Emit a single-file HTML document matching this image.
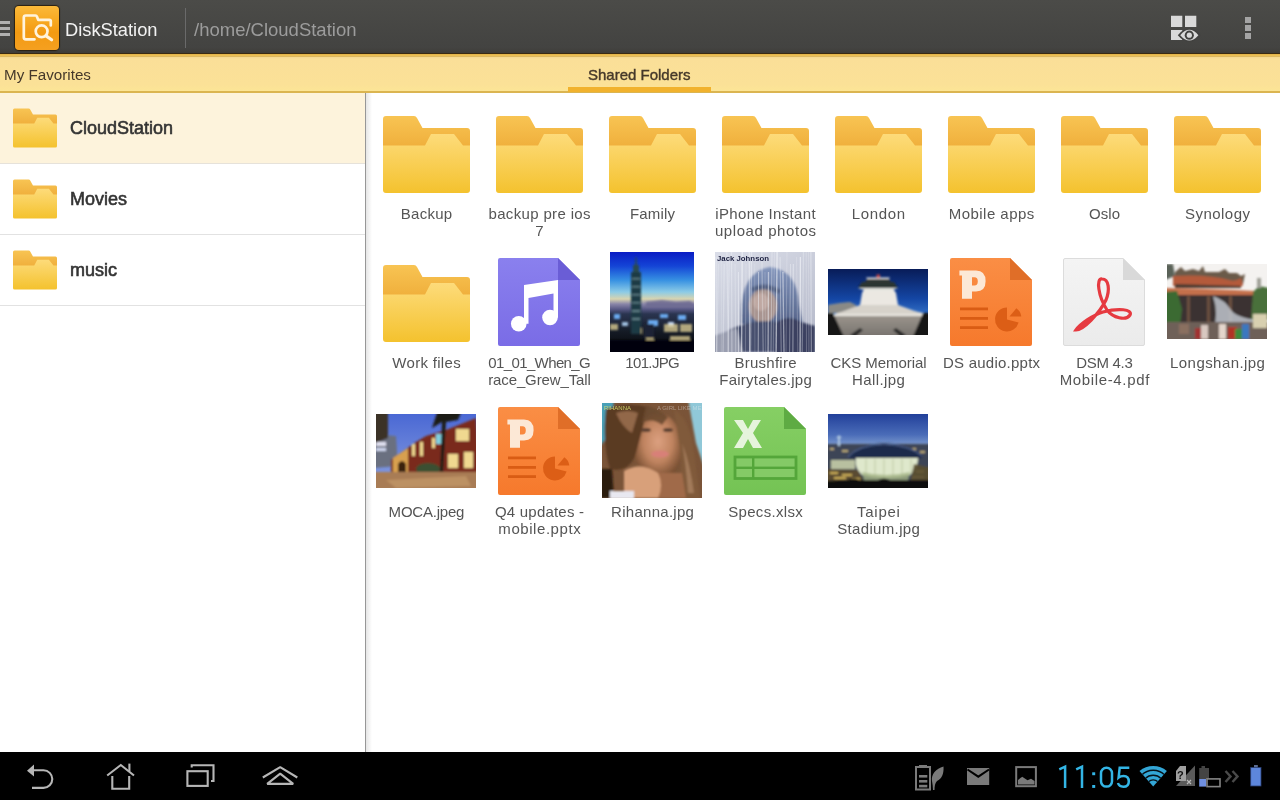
<!DOCTYPE html>
<html><head><meta charset="utf-8">
<style>
*{margin:0;padding:0;box-sizing:border-box}
html,body{width:1280px;height:800px;overflow:hidden;background:#fff;font-family:"Liberation Sans",sans-serif;-webkit-font-smoothing:antialiased}
.abs{will-change:transform}
.abs{position:absolute}
#hdr{left:0;top:0;width:1280px;height:53px;background:linear-gradient(#4b4b48,#434341 90%,#3e3c38)}
#hdrline{left:0;top:53px;width:1280px;height:4px;background:linear-gradient(#3a2a12 0,#3a2a12 0.8px,#e2b246 1.2px,#ecc056 2.4px,#e0b654 3.2px,#d9bc70 4px)}
#tabs{left:0;top:57px;width:1280px;height:34px;background:linear-gradient(#f4d890,#fadf98 2px,#fbe197 80%,#fce596)}
#tabline{left:0;top:91px;width:1280px;height:2px;background:#dbb551}
#tabul{left:568px;top:87px;width:143px;height:5px;background:#f1b22d}
.tabt{font-size:15px;color:#45382a;white-space:nowrap}
#left{left:0;top:93px;width:365px;height:659px;background:#fff}
.row{left:0;width:365px;height:71px}
.sep{left:0;width:365px;height:1px;background:#e2e2e2}
.lname{left:70px;font-size:18px;line-height:20px;color:#333;-webkit-text-stroke:0.6px #333;white-space:nowrap}
#vsep{left:365px;top:93px;width:1px;height:659px;background:#979797}
#vshadow{left:366px;top:93px;width:6px;height:659px;background:linear-gradient(90deg,#e6e6e6,#fff)}
.lbl{width:113px;text-align:center;font-size:15px;line-height:17px;color:#555;white-space:nowrap}
#nav{left:0;top:752px;width:1280px;height:48px;background:#000}
</style></head><body>
<svg width="0" height="0" style="position:absolute">
<defs>
<linearGradient id="fb" x1="0" y1="0" x2="0" y2="1"><stop offset="0" stop-color="#f8c453"/><stop offset="1" stop-color="#eda935"/></linearGradient>
<linearGradient id="ff" x1="0" y1="0" x2="0" y2="1"><stop offset="0" stop-color="#fddb7a"/><stop offset="1" stop-color="#f4c22e"/></linearGradient>
<symbol id="folder" viewBox="0 0 87 77">
<path d="M0,3Q0,0 3,0L31,0Q33,0 34,2L39.5,12L84,12Q87,12 87,15L87,40L0,40Z" fill="url(#fb)"/>
<path d="M0,29.6L42,29.6L48,18L71,18L80,29.6L87,29.6L87,74Q87,77 84,77L3,77Q0,77 0,74Z" fill="url(#ff)"/>
</symbol>
<linearGradient id="gmus" x1="0" y1="0" x2="0" y2="1"><stop offset="0" stop-color="#8a80ee"/><stop offset="1" stop-color="#7a6ce6"/></linearGradient>
<symbol id="musicdoc" viewBox="0 0 82 88">
<path d="M2,0L60,0L82,22L82,86Q82,88 80,88L2,88Q0,88 0,86L0,2Q0,0 2,0Z" fill="url(#gmus)"/>
<path d="M60,0L82,22L60,22Z" fill="#6a5dd6"/>
<path d="M26,27L60,22L60,59.5L55.5,59.5L55.5,35.5L30.5,40L30.5,65.75L26,65.75Z" fill="#fff"/>
<circle cx="20.75" cy="65.75" r="7.8" fill="#fff"/>
<circle cx="52" cy="59.5" r="7.8" fill="#fff"/>
</symbol>
<linearGradient id="gppt" x1="0" y1="0" x2="0" y2="1"><stop offset="0" stop-color="#fa8e45"/><stop offset="1" stop-color="#f6792c"/></linearGradient>
<symbol id="pptdoc" viewBox="0 0 82 88">
<path d="M2,0L60,0L82,22L82,86Q82,88 80,88L2,88Q0,88 0,86L0,2Q0,0 2,0Z" fill="url(#gppt)"/>
<path d="M60,0L82,22L60,22Z" fill="#e06e28"/>
<path d="M9.4,12.6L26,12.6Q35.6,12.6 35.6,23.3Q35.6,33.5 26,33.5L22,33.5L22,40.75L12,40.75L12,17.5L9.4,17.5Z M22,19.2L24.5,19.2Q27.8,19.2 27.8,23.3Q27.8,27.6 24.5,27.6L22,27.6Z" fill="#fce8d6" fill-rule="evenodd"/>
<rect x="10" y="49.5" width="28" height="2.8" fill="#d95c14"/>
<rect x="10" y="59" width="28" height="2.8" fill="#d95c14"/>
<rect x="10" y="68.2" width="28" height="2.8" fill="#d95c14"/>
<path d="M57,61.4L57,49.4A12,12 0 1 0 68.6,64.5Z" fill="#dc5e16"/>
<path d="M59.5,58.5L66.4,50.3A12,12 0 0 1 71.3,58.5Z" fill="#dc5e16"/>
</symbol>
<linearGradient id="gpdf" x1="0" y1="0" x2="0" y2="1"><stop offset="0" stop-color="#f4f4f4"/><stop offset="1" stop-color="#ebebeb"/></linearGradient>
<symbol id="pdfdoc" viewBox="0 0 82 88">
<path d="M2,0.5L60,0.5L81.5,22L81.5,86Q81.5,87.5 80,87.5L2,87.5Q0.5,87.5 0.5,86L0.5,2Q0.5,0.5 2,0.5Z" fill="url(#gpdf)" stroke="#dcdcdc" stroke-width="1"/>
<path d="M60,0L82,22L60,22Z" fill="#d9d9d9"/>
<path d="M39,21 C33,20 35,38 44,52 C50,60 63,63 67,57 C70,51 55,50 40,54 C30,57 17,66 13,72 C20,72 36,56 43,42 C47,32 46,21 39,21Z" fill="none" stroke="#e63a40" stroke-width="3.2"/>
</symbol>
<linearGradient id="gxls" x1="0" y1="0" x2="0" y2="1"><stop offset="0" stop-color="#86cf64"/><stop offset="1" stop-color="#74c354"/></linearGradient>
<symbol id="xlsdoc" viewBox="0 0 82 88">
<path d="M2,0L60,0L82,22L82,86Q82,88 80,88L2,88Q0,88 0,86L0,2Q0,0 2,0Z" fill="url(#gxls)"/>
<path d="M60,0L82,22L60,22Z" fill="#5eab43"/>
<path d="M10,13L19,13L24,22L29,13L37,13L29,26L38,41L29,41L24,32L19,41L10,41L19,26Z" fill="#e6f4dc"/>
<rect x="11" y="50" width="61" height="21.5" fill="#84ca66" stroke="#54a63a" stroke-width="2.8"/>
<rect x="11" y="59.6" width="61" height="2.4" fill="#54a63a"/>
<rect x="28" y="50" width="2.4" height="21.5" fill="#54a63a"/>
</symbol>

</defs>
</svg>

<div id="hdr" class="abs"></div>
<div id="hdrline" class="abs"></div>
<div id="tabs" class="abs"></div>
<div id="tabline" class="abs"></div>
<div id="tabul" class="abs"></div>
<div class="abs tabt" style="left:4px;top:66px;font-size:15.2px">My Favorites</div>
<div class="abs tabt" style="left:588px;top:66px;-webkit-text-stroke:0.4px #45382a">Shared Folders</div>

<!-- header content -->
<div class="abs" style="left:0;top:21px;width:10px;height:3px;background:#b0b0b0"></div>
<div class="abs" style="left:0;top:27px;width:10px;height:3px;background:#b0b0b0"></div>
<div class="abs" style="left:0;top:33px;width:10px;height:3px;background:#b0b0b0"></div>
<div class="abs" style="left:15px;top:6px;width:44px;height:44px;border-radius:4px;background:linear-gradient(#fbb93a,#f7a820 35%,#f39a12 60%,#f5a020);box-shadow:0 0 1px 1px #2a2010"></div>
<svg class="abs" style="left:15px;top:6px" width="44" height="44"><g fill="none" stroke="#fff3dc" stroke-width="2.7" stroke-linecap="round" stroke-linejoin="round"><path d="M19.5,33.3L10.8,33.3Q8.8,33.3 8.8,31.3L8.8,11.5Q8.8,9.5 10.8,9.5L20.5,9.5Q21.5,9.5 22,10.8L23.2,13.8L34.3,13.8Q35.8,13.8 35.8,15.3L35.8,19.5"/><circle cx="26.6" cy="25.3" r="5.9"/></g><line x1="31" y1="29.9" x2="36.6" y2="33.8" stroke="#fff3dc" stroke-width="3.2" stroke-linecap="round"/></svg>
<svg class="abs" style="left:1165px;top:10px" width="40" height="40"><g fill="#d9d9d9"><rect x="6" y="5.75" width="11.3" height="11.25"/><rect x="20" y="5.75" width="11.3" height="11.25"/><rect x="6" y="20" width="11.3" height="10"/></g><path d="M12.8,25.2Q24.3,11.5 35.8,25.2Q24.3,38.9 12.8,25.2Z" fill="#424240"/><path d="M15.2,25.2Q24.3,14.5 33.4,25.2Q24.3,35.9 15.2,25.2Z" fill="#d9d9d9"/><circle cx="24.3" cy="25.2" r="4.6" fill="#424240"/><circle cx="24.3" cy="25.2" r="2.6" fill="#d9d9d9"/></svg>
<div class="abs" style="left:1245px;top:17px;width:6px;height:6px;background:#a4a4a4"></div>
<div class="abs" style="left:1245px;top:25px;width:6px;height:6px;background:#a4a4a4"></div>
<div class="abs" style="left:1245px;top:33px;width:6px;height:6px;background:#a4a4a4"></div>
<div class="abs" style="left:65px;top:18.8px;font-size:18.3px;color:#f2f2f2;white-space:nowrap">DiskStation</div>
<div class="abs" style="left:185px;top:8px;width:1px;height:40px;background:#6a6a6a"></div>
<div class="abs" style="left:194px;top:19px;font-size:18.5px;color:#9c9c9c;white-space:nowrap">/home/CloudStation</div>

<!-- left panel -->
<div id="left" class="abs"></div>
<div class="abs row" style="top:93px;height:70px;background:#fdf3dc"></div>
<div class="abs sep" style="top:163px;background:#e6e2da"></div>
<div class="abs sep" style="top:234px"></div>
<div class="abs sep" style="top:305px"></div>
<svg class="abs" style="left:13px;top:108px" width="44" height="40"><use href="#folder"/></svg>
<svg class="abs" style="left:13px;top:179px" width="44" height="40"><use href="#folder"/></svg>
<svg class="abs" style="left:13px;top:250px" width="44" height="40"><use href="#folder"/></svg>
<div class="abs lname" style="top:117.8px">CloudStation</div>
<div class="abs lname" style="top:188.8px">Movies</div>
<div class="abs lname" style="top:259.8px">music</div>
<div id="vsep" class="abs"></div>
<div id="vshadow" class="abs"></div>

<!-- GRID -->
<svg class="abs" style="left:382.5px;top:116px" width="87" height="77"><use href="#folder"/></svg>
<div class="abs lbl" style="left:369.5px;top:205.3px"><div style="letter-spacing:0.26px;text-indent:0.26px">Backup</div></div>
<svg class="abs" style="left:495.5px;top:116px" width="87" height="77"><use href="#folder"/></svg>
<div class="abs lbl" style="left:482.5px;top:205.3px"><div style="letter-spacing:0.35px;text-indent:0.35px">backup pre ios</div><div style="letter-spacing:0px;text-indent:0px">7</div></div>
<svg class="abs" style="left:608.5px;top:116px" width="87" height="77"><use href="#folder"/></svg>
<div class="abs lbl" style="left:595.5px;top:205.3px"><div style="letter-spacing:0.16px;text-indent:0.16px">Family</div></div>
<svg class="abs" style="left:721.5px;top:116px" width="87" height="77"><use href="#folder"/></svg>
<div class="abs lbl" style="left:708.5px;top:205.3px"><div style="letter-spacing:0.34px;text-indent:0.34px">iPhone Instant</div><div style="letter-spacing:0.58px;text-indent:0.58px">upload photos</div></div>
<svg class="abs" style="left:834.5px;top:116px" width="87" height="77"><use href="#folder"/></svg>
<div class="abs lbl" style="left:821.5px;top:205.3px"><div style="letter-spacing:0.64px;text-indent:0.64px">London</div></div>
<svg class="abs" style="left:947.5px;top:116px" width="87" height="77"><use href="#folder"/></svg>
<div class="abs lbl" style="left:934.5px;top:205.3px"><div style="letter-spacing:0.47px;text-indent:0.47px">Mobile apps</div></div>
<svg class="abs" style="left:1060.5px;top:116px" width="87" height="77"><use href="#folder"/></svg>
<div class="abs lbl" style="left:1047.5px;top:205.3px"><div style="letter-spacing:0.13px;text-indent:0.13px">Oslo</div></div>
<svg class="abs" style="left:1173.5px;top:116px" width="87" height="77"><use href="#folder"/></svg>
<div class="abs lbl" style="left:1160.5px;top:205.3px"><div style="letter-spacing:0.46px;text-indent:0.46px">Synology</div></div>
<svg class="abs" style="left:382.5px;top:265px" width="87" height="77"><use href="#folder"/></svg>
<div class="abs lbl" style="left:369.5px;top:354.3px"><div style="letter-spacing:0.3px;text-indent:0.3px">Work files</div></div>
<svg class="abs" style="left:498.0px;top:258px" width="82" height="88" viewBox="0 0 82 88"><use href="#musicdoc"/></svg>
<div class="abs lbl" style="left:482.5px;top:354.3px"><div style="letter-spacing:-0.61px;text-indent:-0.61px">01_01_When_G</div><div style="letter-spacing:-0.13px;text-indent:-0.13px">race_Grew_Tall</div></div>
<svg class="abs" style="left:610px;top:252px" width="84" height="100" viewBox="0 0 84 100" preserveAspectRatio="none"><defs><linearGradient id="s101" x1="0" y1="0" x2="0" y2="1"><stop offset="0" stop-color="#0a1cc4"/><stop offset="0.14" stop-color="#1444d6"/><stop offset="0.28" stop-color="#3690e2"/><stop offset="0.4" stop-color="#8ccbe6"/><stop offset="0.47" stop-color="#d8d4b0"/><stop offset="0.52" stop-color="#8a86a8"/><stop offset="0.57" stop-color="#5a5a86"/><stop offset="0.62" stop-color="#2a3450"/><stop offset="0.8" stop-color="#141a24"/><stop offset="1" stop-color="#040506"/></linearGradient><filter id="b101" x="-5%" y="-5%" width="110%" height="110%"><feGaussianBlur stdDeviation="0.9"/></filter><clipPath id="c101"><rect width="84" height="100"/></clipPath></defs>
<g clip-path="url(#c101)"><rect width="84" height="100" fill="url(#s101)"/>
<g filter="url(#b101)">
<path d="M36,50 L52,48 L66,50 L80,49 L84,52 L84,55 L36,55Z" fill="#6a6890" opacity="0.8"/>
<g fill="#6aaaf0"><rect x="4" y="62" width="6" height="5"/><rect x="38" y="68" width="10" height="6"/><rect x="50" y="62" width="8" height="4"/><rect x="68" y="63" width="8" height="5"/><rect x="58" y="70" width="6" height="5" fill="#c8e0ff"/><rect x="12" y="70" width="6" height="4" fill="#a0c0e0"/></g>
<g fill="#d8c890" opacity="0.8"><rect x="22" y="76" width="10" height="6"/><rect x="54" y="72" width="14" height="8"/><rect x="70" y="72" width="12" height="8"/><rect x="0" y="72" width="8" height="6"/><rect x="36" y="84" width="8" height="4"/><rect x="60" y="84" width="20" height="4"/></g>
<rect x="34" y="72" width="10" height="14" fill="#1a2434"/>
<path d="M21,20 L31,20 L31,82 L21,82Z" fill="#1f3a44"/>
<path d="M23,13 L29,13 L29,20 L23,20Z M25.5,5 L26.5,5 L27,13 L25,13Z" fill="#2a4850"/>
<g fill="#9cc0c8" opacity="0.5"><rect x="22" y="26" width="8" height="1.5"/><rect x="22" y="34" width="8" height="1.5"/><rect x="22" y="42" width="8" height="1.5"/><rect x="22" y="50" width="8" height="1.5"/><rect x="22" y="58" width="8" height="2"/><rect x="22" y="66" width="8" height="2"/></g>
<rect x="-5" y="88" width="94" height="20" fill="#050607"/>
</g></g>
</svg>
<div class="abs lbl" style="left:595.5px;top:354.3px"><div style="letter-spacing:-0.63px;text-indent:-0.63px">101.JPG</div></div>
<svg class="abs" style="left:715px;top:252px" width="100" height="100" viewBox="0 0 100 100" preserveAspectRatio="none"><defs><linearGradient id="sjk" x1="0" y1="0" x2="0.6" y2="1"><stop offset="0" stop-color="#dadde8"/><stop offset="1" stop-color="#b8bccc"/></linearGradient><linearGradient id="hjk" x1="0" y1="0" x2="0" y2="1"><stop offset="0" stop-color="#8496bc"/><stop offset="1" stop-color="#55648a"/></linearGradient><filter id="bjk" x="-5%" y="-5%" width="110%" height="110%"><feGaussianBlur stdDeviation="1.2"/></filter><clipPath id="cjk"><rect width="100" height="100"/></clipPath></defs>
<g clip-path="url(#cjk)"><rect width="100" height="100" fill="url(#sjk)"/>
<g filter="url(#bjk)">
<path d="M26,62 Q26,20 55,15 Q82,18 84,52 L88,72 L26,72Z" fill="url(#hjk)"/>
<ellipse cx="48" cy="54" rx="14" ry="17" fill="#a89490"/>
<ellipse cx="46" cy="50" rx="8" ry="9" fill="#c4aca6" opacity="0.8"/>
<path d="M36,36 Q50,28 66,38 L64,42 Q50,34 38,40Z" fill="#4a5878" opacity="0.8"/>
<path d="M14,78 Q40,66 62,70 L100,74 L100,100 L10,100Z" fill="#46506e"/>
<path d="M-2,84 L22,76 L28,102 L-2,102Z" fill="#9a9eb0"/>
<path d="M62,70 Q74,62 86,70 L100,74 L100,102 L60,102Z" fill="#3a4060"/>
</g>
<g stroke="#f6f8fc"><line x1="1.0" y1="5" x2="1.5" y2="100" stroke-width="1.0" stroke-opacity="0.4"/><line x1="3.3" y1="12" x2="2.0" y2="100" stroke-width="0.6" stroke-opacity="0.5"/><line x1="6.6" y1="5" x2="6.3" y2="100" stroke-width="0.6" stroke-opacity="0.3"/><line x1="9.2" y1="12" x2="8.1" y2="100" stroke-width="1.3" stroke-opacity="0.3"/><line x1="11.9" y1="0" x2="13.3" y2="100" stroke-width="0.6" stroke-opacity="0.6"/><line x1="14.2" y1="5" x2="13.1" y2="100" stroke-width="0.8" stroke-opacity="0.5"/><line x1="16.6" y1="0" x2="16.9" y2="100" stroke-width="1.0" stroke-opacity="0.4"/><line x1="20.1" y1="12" x2="20.7" y2="100" stroke-width="1.0" stroke-opacity="0.3"/><line x1="23.4" y1="20" x2="23.5" y2="100" stroke-width="0.8" stroke-opacity="0.6"/><line x1="27.2" y1="0" x2="26.6" y2="100" stroke-width="1.3" stroke-opacity="0.6"/><line x1="31.0" y1="12" x2="30.4" y2="100" stroke-width="0.8" stroke-opacity="0.3"/><line x1="34.2" y1="0" x2="34.5" y2="100" stroke-width="1.0" stroke-opacity="0.6"/><line x1="36.5" y1="0" x2="35.5" y2="100" stroke-width="1.3" stroke-opacity="0.4"/><line x1="39.7" y1="12" x2="39.9" y2="100" stroke-width="0.6" stroke-opacity="0.3"/><line x1="43.6" y1="20" x2="43.2" y2="100" stroke-width="1.0" stroke-opacity="0.5"/><line x1="46.8" y1="0" x2="48.2" y2="100" stroke-width="1.3" stroke-opacity="0.3"/><line x1="50.0" y1="20" x2="50.6" y2="100" stroke-width="0.6" stroke-opacity="0.3"/><line x1="53.5" y1="20" x2="53.1" y2="100" stroke-width="1.3" stroke-opacity="0.5"/><line x1="57.0" y1="0" x2="56.0" y2="100" stroke-width="0.6" stroke-opacity="0.6"/><line x1="59.4" y1="0" x2="58.3" y2="100" stroke-width="0.6" stroke-opacity="0.4"/><line x1="62.1" y1="0" x2="61.1" y2="100" stroke-width="1.3" stroke-opacity="0.6"/><line x1="65.1" y1="5" x2="66.2" y2="100" stroke-width="1.0" stroke-opacity="0.4"/><line x1="67.9" y1="20" x2="69.0" y2="100" stroke-width="1.3" stroke-opacity="0.5"/><line x1="72.0" y1="0" x2="71.0" y2="100" stroke-width="0.8" stroke-opacity="0.3"/><line x1="75.5" y1="12" x2="74.6" y2="100" stroke-width="0.6" stroke-opacity="0.6"/><line x1="78.3" y1="12" x2="77.9" y2="100" stroke-width="0.8" stroke-opacity="0.6"/><line x1="81.6" y1="5" x2="82.8" y2="100" stroke-width="0.8" stroke-opacity="0.3"/><line x1="85.4" y1="5" x2="85.1" y2="100" stroke-width="1.3" stroke-opacity="0.6"/><line x1="88.5" y1="0" x2="87.2" y2="100" stroke-width="1.3" stroke-opacity="0.3"/><line x1="91.2" y1="0" x2="91.5" y2="100" stroke-width="0.8" stroke-opacity="0.3"/><line x1="93.6" y1="0" x2="93.9" y2="100" stroke-width="0.8" stroke-opacity="0.3"/><line x1="95.9" y1="0" x2="96.3" y2="100" stroke-width="0.8" stroke-opacity="0.6"/></g>
<text x="2" y="8.5" style="font-family:'Liberation Sans'" font-weight="bold" font-size="7.8" fill="#1c2040">Jack Johnson</text></g></svg>
<div class="abs lbl" style="left:708.5px;top:354.3px"><div style="letter-spacing:0.26px;text-indent:0.26px">Brushfire</div><div style="letter-spacing:0.25px;text-indent:0.25px">Fairytales.jpg</div></div>
<svg class="abs" style="left:828px;top:269px" width="100" height="66" viewBox="0 0 100 66" preserveAspectRatio="none"><defs><linearGradient id="scks" x1="0" y1="0" x2="0" y2="1"><stop offset="0" stop-color="#081c58"/><stop offset="0.45" stop-color="#1446a4"/><stop offset="0.62" stop-color="#2a64bc"/></linearGradient>
<linearGradient id="gcks" x1="0" y1="0" x2="0" y2="1"><stop offset="0" stop-color="#9a948c"/><stop offset="1" stop-color="#706c68"/></linearGradient><filter id="bcks" x="-5%" y="-5%" width="110%" height="110%"><feGaussianBlur stdDeviation="0.9"/></filter><clipPath id="ccks"><rect width="100" height="66"/></clipPath></defs>
<g clip-path="url(#ccks)"><rect width="100" height="66" fill="url(#scks)"/>
<g filter="url(#bcks)">
<path d="M0,36 L12,34 L22,33 L28,36 L28,44 L0,44Z" fill="#8a8a86"/>
<path d="M37,18 L64,18 L68,24 L70,36 L76,40 L95,44 L98,47 L0,47 L10,44 L26,40 L32,36 L34,24Z" fill="#ebe8e2"/>
<path d="M32,36 L70,36 L95,45 L8,45Z" fill="#d6d2ca"/>
<path d="M34,13 L66,13 L70,19 L30,19Z" fill="#2a3430"/>
<path d="M30,19 L70,19 L66,20.5 L34,20.5Z" fill="#d8dcd8"/>
<path d="M40,9 L60,9 L63,13 L37,13Z" fill="#303834"/>
<path d="M38,8.5 L62,8.5 L61,10 L39,10Z" fill="#e0e0e0"/>
<rect x="48.5" y="5.5" width="3.5" height="3.5" fill="#c84848"/>
<rect x="-5" y="47" width="110" height="25" fill="url(#gcks)"/>
<path d="M-2,44 L5,44 L17,70 L-2,70Z" fill="#181818"/>
<path d="M102,44 L95,44 L84,70 L102,70Z" fill="#181818"/>
<path d="M22,66 L32,59 L35,61 L27,68Z M78,66 L68,59 L65,61 L73,68Z" fill="#2a2a2a"/>
</g></g>
</svg>
<div class="abs lbl" style="left:821.5px;top:354.3px"><div style="letter-spacing:-0.04px;text-indent:-0.04px">CKS Memorial</div><div style="letter-spacing:0.41px;text-indent:0.41px">Hall.jpg</div></div>
<svg class="abs" style="left:950.0px;top:258px" width="82" height="88" viewBox="0 0 82 88"><use href="#pptdoc"/></svg>
<div class="abs lbl" style="left:934.5px;top:354.3px"><div style="letter-spacing:0.24px;text-indent:0.24px">DS audio.pptx</div></div>
<svg class="abs" style="left:1063.0px;top:258px" width="82" height="88" viewBox="0 0 82 88"><use href="#pdfdoc"/></svg>
<div class="abs lbl" style="left:1047.5px;top:354.3px"><div style="letter-spacing:-0.28px;text-indent:-0.28px">DSM 4.3</div><div style="letter-spacing:0.65px;text-indent:0.65px">Mobile-4.pdf</div></div>
<svg class="abs" style="left:1167px;top:264px" width="100" height="75" viewBox="0 0 100 75" preserveAspectRatio="none"><defs><filter id="blg" x="-5%" y="-5%" width="110%" height="110%"><feGaussianBlur stdDeviation="1"/></filter><clipPath id="clg"><rect width="100" height="75"/></clipPath></defs>
<g clip-path="url(#clg)"><rect width="100" height="75" fill="#f4f2f0"/>
<g filter="url(#blg)">
<path d="M-2,0 L6,0 L8,12 L-2,16Z" fill="#5a6258"/>
<path d="M8,8 L14,3 L18,7 L26,5 L32,7 L36,2 L38,8 L52,8 L58,5 L62,9 L70,9 L74,12 L78,10 L76,20 L8,20Z" fill="#6a5a4a"/>
<path d="M6,12 Q40,10 62,16 Q68,18 74,14 L76,22 L6,22Z" fill="#b45a3a"/>
<path d="M8,20 L74,22 L74,24 L8,24Z" fill="#4a3a30"/>
<path d="M-2,24 Q50,25 88,27 L95,31 L-2,32Z" fill="#c4704c"/>
<rect x="-2" y="31" width="90" height="30" fill="#3a3230"/>
<g fill="#6a5040"><rect x="20" y="32" width="3" height="26"/><rect x="40" y="32" width="3" height="26"/><rect x="62" y="32" width="3" height="26"/></g>
<path d="M86,28 L92,22 L102,24 L102,56 L84,56Z" fill="#48703a"/>
<rect x="90" y="14" width="4" height="10" fill="#a0a098"/>
<path d="M-2,28 L10,27 L15,45 L12,70 L-2,70Z" fill="#3a6a30"/>
<path d="M46,32 Q58,36 64,46 Q70,54 92,56 L92,66 L46,66 Q52,50 46,32Z" fill="#c0c4cc" opacity="0.85"/>
<rect x="-2" y="58" width="104" height="19" fill="#6e6058"/>
<rect x="34" y="61" width="7" height="14" fill="#d8c8c0"/><rect x="52" y="60" width="7" height="15" fill="#e4d6cc"/><rect x="61" y="63" width="9" height="12" fill="#b03028"/><rect x="75" y="60" width="7" height="15" fill="#3a78c0"/><rect x="28" y="64" width="6" height="11" fill="#a03030"/><rect x="68" y="65" width="7" height="10" fill="#3a8a3a"/><rect x="86" y="50" width="14" height="14" fill="#d8d0b0"/><rect x="12" y="60" width="10" height="10" fill="#8a7060"/>
</g></g>
</svg>
<div class="abs lbl" style="left:1160.5px;top:354.3px"><div style="letter-spacing:0.44px;text-indent:0.44px">Longshan.jpg</div></div>
<svg class="abs" style="left:376px;top:414px" width="100" height="74" viewBox="0 0 100 74" preserveAspectRatio="none"><defs><linearGradient id="smoca" x1="0" y1="0" x2="0" y2="1"><stop offset="0" stop-color="#4a68d4"/><stop offset="1" stop-color="#8aa0e0"/></linearGradient><filter id="bmo" x="-5%" y="-5%" width="110%" height="110%"><feGaussianBlur stdDeviation="0.8"/></filter><clipPath id="cmo"><rect width="100" height="74"/></clipPath></defs>
<g clip-path="url(#cmo)"><rect width="100" height="74" fill="url(#smoca)"/>
<g filter="url(#bmo)">
<path d="M-4,20 L20,22 L22,52 L-4,54Z" fill="#6a7080"/>
<rect x="0" y="28" width="10" height="4" fill="#e0e0f0"/><rect x="0" y="34" width="10" height="3" fill="#d0d8f0"/>
<path d="M-4,-4 L12,-4 L12,24 L-4,30Z" fill="#3a3028"/>
<path d="M15,46 L40,28 L50,22 L70,16 L100,4 L104,60 L15,60Z" fill="#7a2c1c"/>
<path d="M17,44 L32,34 L32,58 L17,58Z" fill="#d8a050"/>
<path d="M22,50 Q26,44 30,50 L30,58 L22,58Z" fill="#3a2010"/>
<g fill="#f0d890"><rect x="72" y="40" width="10" height="14"/><rect x="88" y="38" width="9" height="16"/><rect x="80" y="15" width="13" height="12"/><rect x="36" y="30" width="3" height="12"/><rect x="44" y="28" width="3" height="14"/><rect x="56" y="24" width="3" height="10"/></g>
<rect x="60" y="20" width="6" height="10" fill="#80d0e0"/>
<path d="M62,-4 L86,-4 L82,6 L70,8 L67,60 L64,60 L66,8 L56,14Z" fill="#1e1c18"/>
<ellipse cx="52" cy="55" rx="12" ry="6" fill="#3a5030"/>
<rect x="-4" y="58" width="108" height="20" fill="#a87c54"/>
<path d="M10,66 L90,62 L95,72 L20,74Z" fill="#c49a6a" opacity="0.7"/>
</g></g>
</svg>
<div class="abs lbl" style="left:369.5px;top:503.3px"><div style="letter-spacing:-0.22px;text-indent:-0.22px">MOCA.jpeg</div></div>
<svg class="abs" style="left:498.0px;top:407px" width="82" height="88" viewBox="0 0 82 88"><use href="#pptdoc"/></svg>
<div class="abs lbl" style="left:482.5px;top:503.3px"><div style="letter-spacing:0.21px;text-indent:0.21px">Q4 updates -</div><div style="letter-spacing:0.56px;text-indent:0.56px">mobile.pptx</div></div>
<svg class="abs" style="left:602px;top:403px" width="100" height="95" viewBox="0 0 100 95" preserveAspectRatio="none"><defs><radialGradient id="rface" cx="0.5" cy="0.42" r="0.6"><stop offset="0" stop-color="#dca080"/><stop offset="0.5" stop-color="#c08460"/><stop offset="1" stop-color="#6a4428"/></radialGradient><filter id="bri" x="-5%" y="-5%" width="110%" height="110%"><feGaussianBlur stdDeviation="1.3"/></filter><clipPath id="cri"><rect width="100" height="95"/></clipPath></defs>
<g clip-path="url(#cri)"><rect width="100" height="95" fill="#7a5438"/>
<g filter="url(#bri)">
<path d="M-4,-4 L12,-4 L8,30 L-4,46Z" fill="#4aa0b8"/>
<path d="M86,-4 L104,-4 L104,70 L94,40Z" fill="#90c8d8"/>
<ellipse cx="56" cy="44" rx="24" ry="34" fill="url(#rface)"/>
<path d="M4,6 Q26,-2 46,4 Q40,28 34,50 Q28,70 8,66 Q0,40 4,6Z" fill="#5a3a22"/>
<path d="M14,10 Q26,6 36,10 L30,30 Q20,24 14,10Z" fill="#a07452" opacity="0.8"/>
<path d="M44,2 Q56,6 66,14 L60,22 Q50,14 40,20Z" fill="#6a4a30" opacity="0.9"/>
<path d="M72,6 Q88,16 92,50 L98,95 L76,95 Q82,60 76,32Z" fill="#805a3a"/>
<path d="M80,40 Q88,60 92,90 L86,90 Q84,60 80,40Z" fill="#b08868" opacity="0.7"/>
<ellipse cx="44" cy="27" rx="5" ry="2" fill="#5a4030"/>
<ellipse cx="66" cy="27" rx="5" ry="2" fill="#5a4030"/>
<ellipse cx="58" cy="51" rx="9" ry="3.5" fill="#d88078"/>
<path d="M56,70 L80,70 L84,95 L54,95Z" fill="#a06a48"/>
<path d="M22,68 Q38,58 56,70 Q62,82 56,95 L22,95Z" fill="#d8a07a"/>
<path d="M-4,66 L10,66 L12,95 L-4,95Z" fill="#2a1a10"/>
<rect x="8" y="88" width="24" height="8" fill="#e8e8f0"/>
</g>
<text x="2" y="7" style="font-family:'Liberation Sans'" font-size="6" fill="#d8e070" opacity="0.85">RIHANNA</text>
<text x="55" y="7" style="font-family:'Liberation Sans'" font-size="6" fill="#f0f0f0" opacity="0.4">A GIRL LIKE ME</text>
</g>
</svg>
<div class="abs lbl" style="left:595.5px;top:503.3px"><div style="letter-spacing:0.28px;text-indent:0.28px">Rihanna.jpg</div></div>
<svg class="abs" style="left:724.0px;top:407px" width="82" height="88" viewBox="0 0 82 88"><use href="#xlsdoc"/></svg>
<div class="abs lbl" style="left:708.5px;top:503.3px"><div style="letter-spacing:0.31px;text-indent:0.31px">Specs.xlsx</div></div>
<svg class="abs" style="left:828px;top:414px" width="100" height="74" viewBox="0 0 100 74" preserveAspectRatio="none"><defs><linearGradient id="sstad" x1="0" y1="0" x2="0" y2="1"><stop offset="0" stop-color="#22409a"/><stop offset="0.28" stop-color="#4a6cb8"/><stop offset="0.42" stop-color="#7a98cc"/></linearGradient><filter id="bst" x="-5%" y="-5%" width="110%" height="110%"><feGaussianBlur stdDeviation="0.9"/></filter><clipPath id="cst"><rect width="100" height="74"/></clipPath></defs>
<g clip-path="url(#cst)"><rect width="100" height="74" fill="url(#sstad)"/>
<g filter="url(#bst)">
<rect x="-4" y="30" width="108" height="46" fill="#3c4456"/>
<path d="M8,24 L11,21 L14,24 L12,24 L12,32 L10,32 L10,24Z" fill="#b0c8e0"/>
<g fill="#d8c080" opacity="0.8"><rect x="2" y="34" width="4" height="2"/><rect x="14" y="36" width="6" height="2"/><rect x="84" y="34" width="4" height="2"/><rect x="92" y="37" width="5" height="2"/><rect x="70" y="33" width="4" height="2"/></g>
<path d="M20,43 Q30,30 56,29 Q82,30 94,41 L94,44 L20,44Z" fill="#1c2a4c"/>
<path d="M20,43 Q30,31 56,30 Q82,31 94,42" fill="none" stroke="#6a80b0" stroke-width="0.8"/>
<path d="M28,44 Q26,54 34,61 Q58,67 82,61 Q90,54 90,44Z" fill="#dfe8cc"/>
<g stroke="#9aa878" stroke-width="0.9" opacity="0.55"><line x1="38" y1="45" x2="38" y2="62"/><line x1="47" y1="45" x2="47" y2="64"/><line x1="56" y1="45" x2="56" y2="65"/><line x1="65" y1="45" x2="65" y2="64"/><line x1="74" y1="45" x2="74" y2="63"/><line x1="83" y1="45" x2="83" y2="60"/></g>
<path d="M34,58 Q58,64 82,58 L80,66 L36,66Z" fill="#a4b484" opacity="0.8"/>
<rect x="3" y="46" width="24" height="9" fill="#b8c0a0"/>
<path d="M-4,55 L30,56 L36,68 L-4,68Z" fill="#5a4c30"/>
<g fill="#e0c060" opacity="0.85"><rect x="2" y="58" width="8" height="2"/><rect x="14" y="60" width="10" height="2"/><rect x="6" y="63" width="12" height="2"/><rect x="24" y="64" width="8" height="2"/><rect x="88" y="56" width="8" height="3"/><rect x="84" y="62" width="12" height="2"/></g>
<path d="M86,50 L104,54 L104,68 L82,68Z" fill="#5a5030" opacity="0.9"/>
<path d="M-4,67 L20,66 Q26,63 32,66 L50,66 Q56,63 62,66 L104,66 L104,78 L-4,78Z" fill="#0c0e10"/>
</g></g>
</svg>
<div class="abs lbl" style="left:821.5px;top:503.3px"><div style="letter-spacing:0.74px;text-indent:0.74px">Taipei</div><div style="letter-spacing:0.35px;text-indent:0.35px">Stadium.jpg</div></div>


<div id="nav" class="abs"></div>
<svg class="abs" style="left:0;top:0" width="1280" height="800">
<g fill="none" stroke="#b6b6b6" stroke-width="2.1">
<path d="M34,770.3L43.5,770.3A8.8,8.8 0 0 1 43.5,787.9L32,787.9"/>
<polyline points="107.2,775.5 120.8,765 134,775.5"/>
<line x1="129.4" y1="763.6" x2="129.4" y2="771.5"/>
<polyline points="112.3,776 112.3,788.8 129.2,788.8 129.2,776"/>
<rect x="187.4" y="771.2" width="20.3" height="14.7"/>
<polyline points="191.7,767.5 191.7,765.3 213.5,765.3 213.5,781 211,781"/>
<polyline points="262.8,777.5 280.2,767.2 297.3,777.5" stroke-linejoin="bevel"/>
<polygon points="280.2,773.6 267.2,783.9 293.2,783.9" stroke-linejoin="bevel"/>
</g>
<polygon points="27,770.7 34,764.6 34,776.6" fill="#b6b6b6"/>
<g fill="#7a7a7a">
<rect x="919" y="765" width="8" height="2.5"/>
<rect x="919" y="775" width="8.3" height="2.6"/>
<rect x="919" y="780" width="8.3" height="2.6"/>
<rect x="919" y="784.8" width="8.3" height="2.6"/>
<path d="M943.5,766.5C936,769 931,774 932,781C932.5,784 933,787 933,790L934.5,790C934.5,786 935,783 937,781C942,779 944,773 943.5,766.5Z"/>
<rect x="967" y="768" width="22.2" height="17"/>
<polygon points="1018,784.5 1018,780 1022.2,776.7 1027.5,780.2 1031,778.8 1034.5,781 1034.5,784.5"/>
</g>
<rect x="916" y="767" width="14" height="22.5" fill="none" stroke="#7a7a7a" stroke-width="2"/>
<polyline points="967.5,769.5 978.3,776.7 989,769.5" fill="none" stroke="#000" stroke-width="2"/>
<rect x="1016.2" y="767.1" width="19.7" height="19.1" fill="none" stroke="#7a7a7a" stroke-width="2"/>
<g fill="none" stroke="#33b5e5" stroke-width="2.5">
<path d="M1059.3,769.3L1065.1,766.6L1065.1,788"/>
<path d="M1076.2,769.3L1082,766.6L1082,788"/>
<rect x="1101" y="767.7" width="11" height="18.9" rx="5.4"/>
<path d="M1129.3,767.7L1119.7,767.7L1118.6,777.6Q1120.6,775.9 1123.6,775.9Q1128.8,775.9 1128.8,781.4Q1128.8,786.7 1123.4,786.7Q1119,786.7 1118,783"/>
</g>
<rect x="1092.2" y="772.3" width="3" height="2.9" fill="#33b5e5"/>
<rect x="1092.2" y="785" width="3" height="2.9" fill="#33b5e5"/>
<!-- wifi -->
<defs><clipPath id="wclip"><path d="M1139.5,771A21,21 0 0 1 1166.9,771L1153.2,786.5Z"/></clipPath></defs>
<g clip-path="url(#wclip)">
<rect x="1138" y="764" width="30" height="24" fill="#33a6d6"/>
<g fill="none" stroke="#06121a" stroke-width="1.4">
<circle cx="1153.2" cy="786.5" r="6.6"/>
<circle cx="1153.2" cy="786.5" r="11.2"/>
<circle cx="1153.2" cy="786.5" r="16.2"/>
</g>
</g>
<!-- no-sim / signal -->
<polygon points="1176,786 1195,765.6 1195,786" fill="#5a5a5a"/>
<path d="M1176,771L1180,766L1186,766L1186,781L1176,781Z" fill="#a0a0a0"/>
<text x="1177" y="779" style="font-family:'Liberation Sans'" font-weight="bold" font-size="11" fill="#111">?</text>
<path d="M1187,780L1191,784M1191,780L1187,784" stroke="#bbb" stroke-width="1.2"/>
<!-- small battery + rect -->
<rect x="1201.5" y="766" width="3.5" height="2" fill="#444"/>
<rect x="1199.2" y="768" width="9.8" height="11" fill="#444"/>
<rect x="1199.2" y="779" width="6.8" height="7.6" fill="#6f8fe0"/>
<rect x="1207" y="778.9" width="13" height="7.7" fill="none" stroke="#858585" stroke-width="1.6"/>
<!-- >> -->
<polyline points="1225.5,771 1230.5,776.4 1225.5,782" fill="none" stroke="#4a4a4a" stroke-width="2.4"/>
<polyline points="1232.5,771 1237.5,776.4 1232.5,782" fill="none" stroke="#4a4a4a" stroke-width="2.4"/>
<!-- battery -->
<rect x="1254" y="765" width="3.8" height="3" fill="#5b6c90"/>
<rect x="1250.7" y="767.5" width="10.3" height="18.5" fill="#5d86dc" stroke="#2a3e70" stroke-width="0.8"/>
</svg>

</body></html>
